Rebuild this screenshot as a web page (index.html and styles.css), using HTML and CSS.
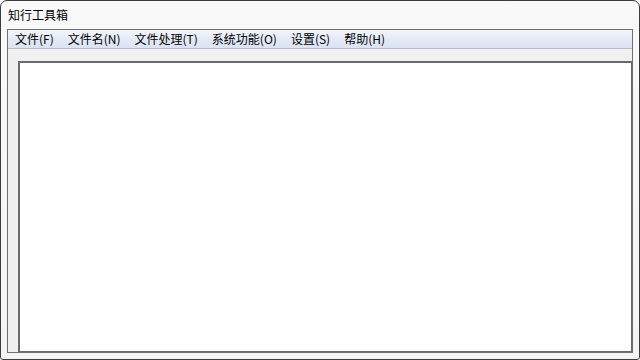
FILE: index.html
```html
<!DOCTYPE html>
<html lang="zh-CN">
<head>
    <meta charset="UTF-8">
    <title>知行工具箱</title>
    <link rel="stylesheet" href="styles.css">
</head>
<body>
    <!-- 主窗口 -->
    <div class="window">
        <div class="title-bar">知行工具箱</div>
        <div class="client">
            <!-- 菜单栏 -->
            <ul class="menubar">
                <li class="menu-item">文件(F)</li>
                <li class="menu-item">文件名(N)</li>
                <li class="menu-item">文件处理(T)</li>
                <li class="menu-item">系统功能(O)</li>
                <li class="menu-item">设置(S)</li>
                <li class="menu-item">帮助(H)</li>
            </ul>
            <!-- 工作区 -->
            <div class="workspace">
                <div class="content"></div>
            </div>
        </div>
    </div>
</body>
</html>
```

FILE: styles.css
```css
* {
    margin: 0;
    padding: 0;
    box-sizing: border-box;
}

body {
    width: 640px;
    height: 360px;
    overflow: hidden;
    background: #ffffff;
    font-family: "Noto Sans CJK SC", "Microsoft YaHei", sans-serif;
    font-size: 12px;
    color: #000;
}

/* 窗口框架 */
.window {
    width: 640px;
    height: 360px;
    border: 1px solid #3c3c3c;
    border-radius: 7px 7px 3px 3px;
    background: linear-gradient(to bottom, #f9f9f9 0%, #f4f4f4 100%);
    padding: 0 6px 6px 6px;
    display: flex;
    flex-direction: column;
}

.title-bar {
    height: 28px;
    line-height: 27px;
    padding-left: 1px;
    flex-shrink: 0;
}

.client {
    flex: 1;
    border: 1px solid #6e6e6e;
    background: #f0f0f0;
    display: flex;
    flex-direction: column;
    min-height: 0;
}

/* 菜单栏 */
.menubar {
    list-style: none;
    display: flex;
    height: 19px;
    padding-left: 0;
    background: linear-gradient(to bottom, #f3f5fb 0%, #e4eaf6 50%, #dbe3f3 100%);
    border-bottom: 1px solid #b9bcc4;
    flex-shrink: 0;
}

.menu-item {
    padding: 0 6px 0 7px;
    margin-right: 1px;
    line-height: 18px;
}

/* 工作区 */
.workspace {
    flex: 1;
    padding: 12px 0 0 10px;
    display: flex;
    min-height: 0;
}

.content {
    flex: 1;
    background: #ffffff;
    border: 1px solid #6a6a6a;
    border-top-width: 2px;
    border-left-width: 2px;
}
```
